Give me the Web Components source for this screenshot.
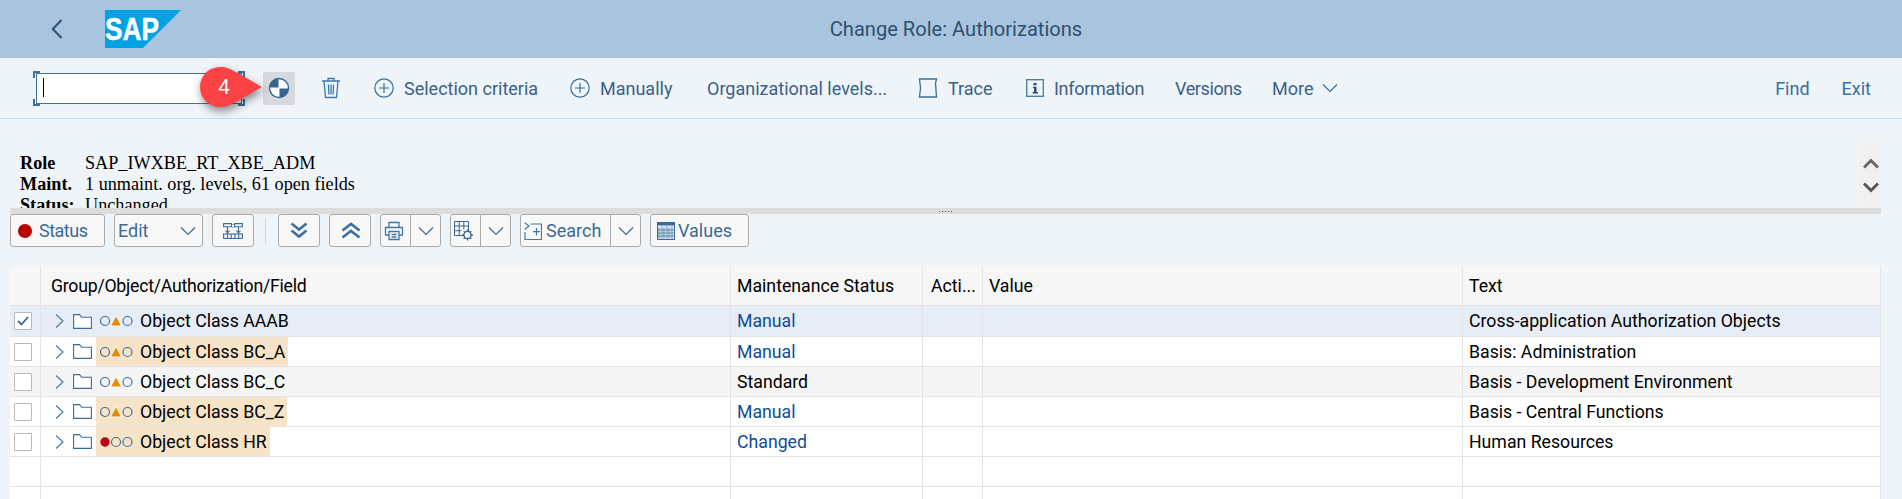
<!DOCTYPE html>
<html>
<head>
<meta charset="utf-8">
<title>Change Role: Authorizations</title>
<style>
  html, body { margin: 0; height: 499px; overflow: hidden; background: #eff4f9; }
  body { font-family: Roboto, "Noto Sans", sans-serif; font-size: 18px; }
  svg { display: block; }
</style>
</head>
<body>
<sap-shell-bar>Change Role: Authorizations</sap-shell-bar>

<sap-app-toolbar>
  <sap-command-field></sap-command-field>
  <sap-callout>4</sap-callout>
  <sap-tool-item active style="margin-left:18px" icon="enter"></sap-tool-item>
  <sap-tool-item style="margin-left:26px" icon="trash"></sap-tool-item>
  <sap-tool-item style="margin-left:33px;width:162px" icon="plus">Selection criteria</sap-tool-item>
  <sap-tool-item style="margin-left:34px;width:103px" icon="plus">Manually</sap-tool-item>
  <sap-tool-item style="margin-left:34px;width:178px">Organizational levels...</sap-tool-item>
  <sap-tool-item style="margin-left:33px;width:73px" icon="page">Trace</sap-tool-item>
  <sap-tool-item style="margin-left:35px;width:116px;letter-spacing:-.3px" icon="info">Information</sap-tool-item>
  <sap-tool-item style="margin-left:33px;width:66px;letter-spacing:-.4px">Versions</sap-tool-item>
  <sap-tool-item style="margin-left:31px;width:64px;gap:8px" after="chevron">More</sap-tool-item>
  <sap-tool-item style="margin-left:auto;color:#386fa4">Find</sap-tool-item>
  <sap-tool-item style="margin-left:32px;margin-right:31px;color:#386fa4">Exit</sap-tool-item>
</sap-app-toolbar>

<sap-info-panel>
  <b>Role</b><span>SAP_IWXBE_RT_XBE_ADM</span>
  <b>Maint.</b><span>1 unmaint. org. levels, 61 open fields</span>
  <b>Status:</b><span>Unchanged</span>
</sap-info-panel>

<sap-splitter></sap-splitter>

<sap-alv-toolbar>
  <sap-alv-button style="width:95px;--pad:7px;--gap:7px;letter-spacing:-.5px" icon="led">Status</sap-alv-button>
  <sap-alv-button style="width:89px;--pad:3px" select>Edit</sap-alv-button>
  <sap-alv-button style="width:42px;--pad:10px" icon="tree"></sap-alv-button>
  <i class="sep"></i>
  <sap-alv-button style="width:42px;--pad:11px" icon="down"></sap-alv-button>
  <sap-alv-button style="width:42px;--pad:11px" icon="up"></sap-alv-button>
  <sap-alv-button style="width:61px;--pad:3px" icon="print" menu></sap-alv-button>
  <sap-alv-button style="width:61px;--pad:3px" icon="layout" menu></sap-alv-button>
  <sap-alv-button style="width:121px;--pad:3px" icon="search" menu>Search</sap-alv-button>
  <sap-alv-button style="width:99px;--pad:6px;--gap:3px" icon="values">Values</sap-alv-button>
</sap-alv-toolbar>

<sap-grid>
  <sap-grid-row header>
    Group/Object/Authorization/Field
    <span slot="status">Maintenance Status</span>
    <span slot="action">Acti...</span>
    <span slot="value">Value</span>
    <span slot="text">Text</span>
  </sap-grid-row>
  <sap-grid-row tone="selected" checked lights="amber" link>
    Object Class AAAB
    <span slot="status">Manual</span>
    <span slot="text">Cross-application Authorization Objects</span>
  </sap-grid-row>
  <sap-grid-row lights="amber" marked link>
    Object Class BC_A
    <span slot="status">Manual</span>
    <span slot="text">Basis: Administration</span>
  </sap-grid-row>
  <sap-grid-row tone="alt" lights="amber">
    Object Class BC_C
    <span slot="status">Standard</span>
    <span slot="text">Basis - Development Environment</span>
  </sap-grid-row>
  <sap-grid-row lights="amber" marked link>
    Object Class BC_Z
    <span slot="status">Manual</span>
    <span slot="text">Basis - Central Functions</span>
  </sap-grid-row>
  <sap-grid-row lights="red" marked link>
    Object Class HR
    <span slot="status">Changed</span>
    <span slot="text">Human Resources</span>
  </sap-grid-row>
  <sap-grid-row empty></sap-grid-row>
  <sap-grid-row empty></sap-grid-row>
</sap-grid>

<script>
// icons shared by the toolbars
const ICONS = {
  enter: `<svg width="22" height="22" viewBox="0 0 22 22"><circle cx="11" cy="11" r="9.500" fill="#fff" stroke="#36648f" stroke-width="1.400"/><path d="M10.500 10.500V1.500A9.500 9.500 0 0 0 1.500 10.500ZM11.500 11.500v9A9.500 9.500 0 0 0 20.500 11.500Z" fill="#36648f"/></svg>`,
  trash: `<svg width="20" height="22" viewBox="0 0 20 22" fill="none" stroke="#3f77a8" stroke-width="1.300"><path d="M1 4h18M7 4V1.500h6V4M3 4l1.500 16.500h11L17 4M7.500 7.500l.4 10M10 7.500v10M12.500 7.500l-.4 10"/></svg>`,
  plus: `<svg width="20" height="20" viewBox="0 0 20 20" fill="none" stroke="#3b6d9a" stroke-width="1.200"><circle cx="10" cy="10" r="9.200"/><path d="M10 5v10M5 10h10"/></svg>`,
  page: `<svg width="20" height="20" viewBox="0 0 20 20" fill="none" stroke="#3b6d9a" stroke-width="1.300"><path d="M1.500 1h17l-1 4 1 14h-17l1-9Z"/></svg>`,
  info: `<svg width="18" height="20" viewBox="0 0 18 20"><rect x=".7" y="1.700" width="16.600" height="16.600" fill="none" stroke="#3f77a8" stroke-width="1.300"/><path d="M7.500 5h3v2.200h-3ZM7 8.700h3.500v5.300H12v1.400H6.600V14H8v-3.900H7Z" fill="#2c4f70"/></svg>`,
  chevron: `<svg width="18" height="10" viewBox="0 0 18 10" fill="none" stroke="#3b6d9a" stroke-width="1.200"><path d="M2 1.500l7 7 7-7"/></svg>`,
  led: `<svg width="14" height="14" viewBox="0 0 14 14"><circle cx="7" cy="7" r="7" fill="#b80000"/></svg>`,
  tree: `<svg width="20" height="16" viewBox="0 0 20 16" fill="none" stroke="#3b6d9a" stroke-width="1.100"><path d="M.6 .6h7.800v3.200H.6ZM11.600 .6h7.800v3.200h-7.800ZM4.500 3.800v6M15.500 3.800v6M2.500 7.500l2 2.500 2-2.500M13.500 7.500l2 2.500 2-2.500"/><path d="M9.500 1h1v1h-1ZM9.500 4h1v1h-1Z" fill="#3b6d9a" stroke="none"/><rect x=".6" y="11" width="18.800" height="4.400"/><path d="M4.500 11v4.400M8.200 11v4.400M12 11v4.400M15.700 11v4.400"/></svg>`,
  down: `<svg width="18" height="17" viewBox="0 0 18 17" fill="none" stroke="#3a70a2" stroke-width="2.600"><path d="M1.500 1.500L9 7.500l7.500-6M1.500 8.500L9 14.500l7.500-6"/></svg>`,
  up: `<svg width="20" height="17" viewBox="0 0 20 17" fill="none" stroke="#3a70a2" stroke-width="2.600"><path d="M1.500 8.500L10 2l8.500 6.500M1.500 15.500L10 9l8.500 6.500"/></svg>`,
  print: `<svg width="20" height="20" viewBox="0 0 20 20" fill="none" stroke="#3f77a8" stroke-width="1.300"><path d="M5 6V1.500h10V6M5 14H1.500V6.500h17V14H15"/><path d="M5 10.500h10v8H5ZM7.500 13.500h5M7.500 16h5"/></svg>`,
  layout: `<svg width="20" height="20" viewBox="0 0 20 20" fill="none" stroke="#3d6690" stroke-width="1"><path d="M.5 .5h14v14H.5ZM.5 5h14M.5 9.700h7M5.200 .5v14M9.800 .5v8"/><circle cx="13.500" cy="14" r="3.600" fill="#f8f8f8" stroke-width="1.400"/><path d="M13.500 8.500v2M13.500 17.500v2M8 14h2M17 14h2M9.700 10.200l1.300 1.300M16 16.500l1.300 1.300M17.300 10.200L16 11.500M11 16.500l-1.300 1.300" stroke-width="1.300"/></svg>`,
  search: `<svg width="18" height="18" viewBox="0 0 18 18" fill="none" stroke="#3f77a8" stroke-width="1.200"><path d="M.7 .7L5 4 .7 7.500M6.500 2h11v15.500H1V10"/><path d="M9 9.700h7M12.500 6v7.500"/></svg>`,
  values: `<svg width="18" height="18" viewBox="0 0 18 18"><rect x=".5" y=".5" width="17" height="17" fill="#eef2f6" stroke="#3a6a96"/><rect width="18" height="3.500" fill="#3a6a96"/><path d="M1 5.500h2.500v11H1ZM6 5.500h2.500v11H6ZM11 5.500h2.500v11H11Z" fill="#a9bed2"/><path d="M5 4v13M10 4v13M15 4v13M1 8h16M1 11h16M1 14h16" stroke="#3a6a96" stroke-width=".7"/></svg>`,
};

class SapShellBar extends HTMLElement {
  constructor() {
    super();
    this.attachShadow({ mode: 'open' });
    this.shadowRoot.innerHTML = `
      <style>
        :host { display: grid; grid-template-columns: 1fr auto 1fr; align-items: center; height: 58px; background: #a9c4de; color: #2f5070; }
        .left { display: flex; align-items: center; padding-left: 51px; }
        .title { font-size: 20.100px; padding-left: 10px; }
        .logo { margin-left: 42px; }
        text { font: bold 32px "Liberation Sans", sans-serif; fill: #fff; stroke: #fff; stroke-width: .5px; }
      </style>
      <div class="left">
        <svg width="12" height="20" viewBox="0 0 12 20" fill="none" stroke="#2f5678" stroke-width="2.200"><path d="M10.500 1L1.800 10l8.700 9"/></svg>
        <svg class="logo" width="76" height="38" viewBox="0 0 76 38">
          <polygon points="0,0 76,0 38,38 0,38" fill="#00a2e4"/>
          <text x="0" y="30" textLength="54" lengthAdjust="spacingAndGlyphs">SAP</text>
        </svg>
      </div>
      <div class="title"><slot></slot></div>
      <div></div>`;
  }
}

class SapAppToolbar extends HTMLElement {
  constructor() {
    super();
    this.attachShadow({ mode: 'open' });
    this.shadowRoot.innerHTML = `
      <style>
        :host { display: flex; position: relative; align-items: center; height: 61px; padding-left: 33px; box-sizing: border-box; border-bottom: 1px solid #c9dcee; }
      </style>
      <slot></slot>`;
  }
}

class SapCommandField extends HTMLElement {
  constructor() {
    super();
    this.attachShadow({ mode: 'open' });
    this.shadowRoot.innerHTML = `
      <style>
        :host { display: block; width: 212px; height: 35px; padding: 2px 3px; box-sizing: border-box;
          background:
            linear-gradient(#3f709e,#3f709e) 0 0/7px 2px no-repeat, linear-gradient(#3f709e,#3f709e) 0 0/2px 7px no-repeat,
            linear-gradient(#3f709e,#3f709e) 100% 0/7px 2px no-repeat, linear-gradient(#3f709e,#3f709e) 100% 0/2px 7px no-repeat,
            linear-gradient(#3f709e,#3f709e) 0 100%/7px 2px no-repeat, linear-gradient(#3f709e,#3f709e) 0 100%/2px 7px no-repeat,
            linear-gradient(#3f709e,#3f709e) 100% 100%/7px 2px no-repeat, linear-gradient(#3f709e,#3f709e) 100% 100%/2px 7px no-repeat;
        }
        .box { height: 100%; box-sizing: border-box; background: #fff; border: 1px solid #3f709e; padding: 4px 0 0 6px; }
        .caret { width: 1px; height: 19px; background: #000; }
      </style>
      <div class="box"><div class="caret"></div></div>`;
  }
}

class SapToolItem extends HTMLElement {
  static observedAttributes = ['icon', 'after'];
  constructor() {
    super();
    this.attachShadow({ mode: 'open' });
    this.shadowRoot.innerHTML = `
      <style>
        :host { display: inline-flex; align-items: center; gap: 10px; color: #3a6187; white-space: nowrap; font-size: 18px; }
        :host([active]) { background: #d5d8de; border-radius: 2px; width: 32px; height: 33px; justify-content: center; }
        .ic { display: flex; }
        .ic:empty { display: none; }
      </style>
      <span class="ic before"></span><slot></slot><span class="ic after"></span>`;
  }
  attributeChangedCallback(name, _, v) {
    this.shadowRoot.querySelector(name == 'icon' ? '.before' : '.after').innerHTML = ICONS[v] || '';
  }
}

class SapCallout extends HTMLElement {
  constructor() {
    super();
    this.attachShadow({ mode: 'open' });
    this.shadowRoot.innerHTML = `
      <style>
        :host { position: absolute; left: 200px; top: 9px; width: 62px; height: 40px; z-index: 2; color: #fff; font-size: 21px; filter: drop-shadow(1px 4px 4px rgba(0,0,0,.45)); }
        svg { position: absolute; inset: 0; }
        span { position: absolute; left: 0; width: 48px; top: 0; line-height: 40px; text-align: center; }
      </style>
      <svg width="62" height="40" viewBox="0 0 62 40"><path d="M20 0C27 0 30 2 36 5L62 20 36 35C30 38 27 40 20 40A20 20 0 0 1 20 0Z" fill="#fb4245"/></svg>
      <span><slot></slot></span>`;
  }
}

class SapInfoPanel extends HTMLElement {
  constructor() {
    super();
    this.attachShadow({ mode: 'open' });
    this.shadowRoot.innerHTML = `
      <style>
        :host { display: flex; height: 89px; overflow: hidden; padding-right: 21px; box-sizing: border-box; font: 18.200px/21px "Liberation Serif", serif; color: #000; }
        .lines { flex: 1; display: grid; grid-template-columns: 65px 1fr; align-content: start; padding: 34px 0 0 20px; }
        .arrows { align-self: flex-end; width: 21px; height: 65px; background: #f0f0f0; display: flex; flex-direction: column; align-items: center; justify-content: center; gap: 13px; }
        ::slotted(b) { font-weight: bold; }
      </style>
      <div class="lines"><slot></slot></div>
      <div class="arrows">
        <svg width="16" height="12" viewBox="0 0 16 12" fill="none" stroke="#666" stroke-width="3"><path d="M1 10.500l7-7 7 7"/></svg>
        <svg width="16" height="12" viewBox="0 0 16 12" fill="none" stroke="#555" stroke-width="3"><path d="M1 1.500l7 7 7-7"/></svg>
      </div>`;
  }
}

class SapSplitter extends HTMLElement {
  constructor() {
    super();
    this.attachShadow({ mode: 'open' });
    this.shadowRoot.innerHTML = `
      <style>
        :host { display: flex; justify-content: center; align-items: center; height: 6px; margin: 0 21px 0 10px; background: #dcdcdc; }
        i { width: 14px; height: 1px; background: repeating-linear-gradient(90deg,#555 0 1px,transparent 1px 3px); }
      </style>
      <i></i>`;
  }
}

class SapAlvToolbar extends HTMLElement {
  constructor() {
    super();
    this.attachShadow({ mode: 'open' });
    this.shadowRoot.innerHTML = `
      <style>
        :host { display: flex; align-items: center; gap: 9px; height: 52px; padding: 0 0 19px 10px; box-sizing: border-box; }
        ::slotted(.sep) { width: 1px; height: 26px; background: #d5d5d5; margin: 0 3px 0 2px; }
      </style>
      <slot></slot>`;
  }
}

class SapAlvButton extends HTMLElement {
  static observedAttributes = ['icon'];
  constructor() {
    super();
    this.attachShadow({ mode: 'open' });
    this.shadowRoot.innerHTML = `
      <style>
        :host { display: flex; height: 33px; box-sizing: border-box; border: 1px solid #aaa; border-radius: 3px; background: #f8f8f8; color: #3a6a96; font-size: 18px; }
        .main { flex: 1; display: flex; align-items: center; gap: var(--gap, 4px); padding-left: var(--pad, 7px); min-width: 0; }
        .drop { display: none; width: 29px; border-left: 1px solid #aaa; align-items: center; justify-content: center; }
        :host([menu]) .drop, :host([select]) .drop { display: flex; }
        :host([select]) .drop { border-left: 0; }
        .ic { display: flex; }
        .ic:empty { display: none; }
      </style>
      <div class="main"><span class="ic"></span><slot></slot></div>
      <div class="drop">${ICONS.chevron}</div>`;
  }
  attributeChangedCallback(_, __, v) {
    this.shadowRoot.querySelector('.ic').innerHTML = ICONS[v] || '';
  }
}

class SapGrid extends HTMLElement {
  constructor() {
    super();
    this.attachShadow({ mode: 'open' });
    this.shadowRoot.innerHTML = `
      <style>
        :host { display: block; margin: 0 21px 0 10px; --cols: 31px 690px 192px 60px 480px 1fr; }
      </style>
      <slot></slot>`;
  }
}

class SapGridRow extends HTMLElement {
  constructor() {
    super();
    this.attachShadow({ mode: 'open' });
    this.shadowRoot.innerHTML = `
      <style>
        :host { display: grid; grid-template-columns: var(--cols); height: 30px; background: #fff; color: #000; font-size: 17.700px; border-bottom: 1px solid #e4e4e4; box-sizing: border-box; }
        :host([header]) { height: 40px; background: #f6f6f6; }
        :host([tone=selected]) { height: 31px; background: #e6edf6; }
        :host([tone=alt]) { background: #f5f5f5; }
        :host([link]) .status { color: #0f4c9a; }
        .c { border-right: 1px solid #e4e4e4; display: flex; align-items: center; white-space: nowrap; overflow: hidden; padding-left: 6px; }
        .select { padding-left: 4px; }
        .box { width: 18px; height: 18px; box-sizing: border-box; background: #fff; border: 1.500px solid #b8b8b8; border-radius: 1px; display: flex; align-items: center; justify-content: center; }
        .name { padding-left: 14px; }
        :host([header]) .name { padding-left: 10px; letter-spacing: -.25px; }
        .action { padding-left: 8px; }
        .folder { margin: 0 4px 0 9px; }
        .tag { display: flex; align-items: center; height: 100%; padding: 0 3px 0 4px; gap: 7px; }
        :host([marked]) .tag { background: #f7e3c8; }
      </style>
      <div class="c select"></div>
      <div class="c name"></div>
      <div class="c status"><slot name="status"></slot></div>
      <div class="c action"><slot name="action"></slot></div>
      <div class="c"><slot name="value"></slot></div>
      <div class="c"><slot name="text"></slot></div>`;
  }
  connectedCallback() {
    const name = this.shadowRoot.querySelector('.name');
    if (this.hasAttribute('header')) {
      name.innerHTML = '<slot></slot>';
      return;
    }
    if (this.hasAttribute('empty')) return;
    this.shadowRoot.querySelector('.select').innerHTML = `<div class="box">${this.hasAttribute('checked')
      ? '<svg width="12" height="10" viewBox="0 0 12 10" fill="none" stroke="#3b6a98" stroke-width="1.800"><path d="M1 5l3.500 3.500L11 1"/></svg>' : ''}</div>`;
    name.innerHTML = `
      <svg width="9" height="14" viewBox="0 0 9 14" fill="none" stroke="#4a7ba7" stroke-width="1.200"><path d="M1 .5L8 7l-7 6.500"/></svg>
      <svg class="folder" width="19" height="15" viewBox="0 0 19 15" fill="#fff" stroke="#3c6c9c" stroke-width="1.100"><path d="M.6 14.400V.6h6l2 2.700h9.800v11.100Z"/></svg>
      <div class="tag"><sap-lights value="${this.getAttribute('lights')}"></sap-lights><slot></slot></div>`;
  }
}

class SapLights extends HTMLElement {
  constructor() {
    super();
    this.attachShadow({ mode: 'open' });
  }
  connectedCallback() {
    const ring = (x) => `<circle cx="${x}" cy="8" r="4.500" fill="none" stroke="#3f6f9c" stroke-width="1.200"/>`;
    const body = this.getAttribute('value') == 'red'
      ? `<circle cx="5" cy="8" r="4.700" fill="#b80014"/>${ring(16)}${ring(27.500)}`
      : `${ring(5)}<path d="M16 2L22 13.500H10Z" fill="#fff"/><path d="M16 3.500L20.800 12.500H11.200Z" fill="#e68a0a"/>${ring(27.500)}`;
    this.shadowRoot.innerHTML = `<style>:host { display: block; }</style>
      <svg style="display:block" width="33" height="16" viewBox="0 0 33 16">${body}</svg>`;
  }
}

customElements.define('sap-shell-bar', SapShellBar);
customElements.define('sap-app-toolbar', SapAppToolbar);
customElements.define('sap-command-field', SapCommandField);
customElements.define('sap-tool-item', SapToolItem);
customElements.define('sap-callout', SapCallout);
customElements.define('sap-info-panel', SapInfoPanel);
customElements.define('sap-splitter', SapSplitter);
customElements.define('sap-alv-toolbar', SapAlvToolbar);
customElements.define('sap-alv-button', SapAlvButton);
customElements.define('sap-grid', SapGrid);
customElements.define('sap-grid-row', SapGridRow);
customElements.define('sap-lights', SapLights);
</script>
</body>
</html>
